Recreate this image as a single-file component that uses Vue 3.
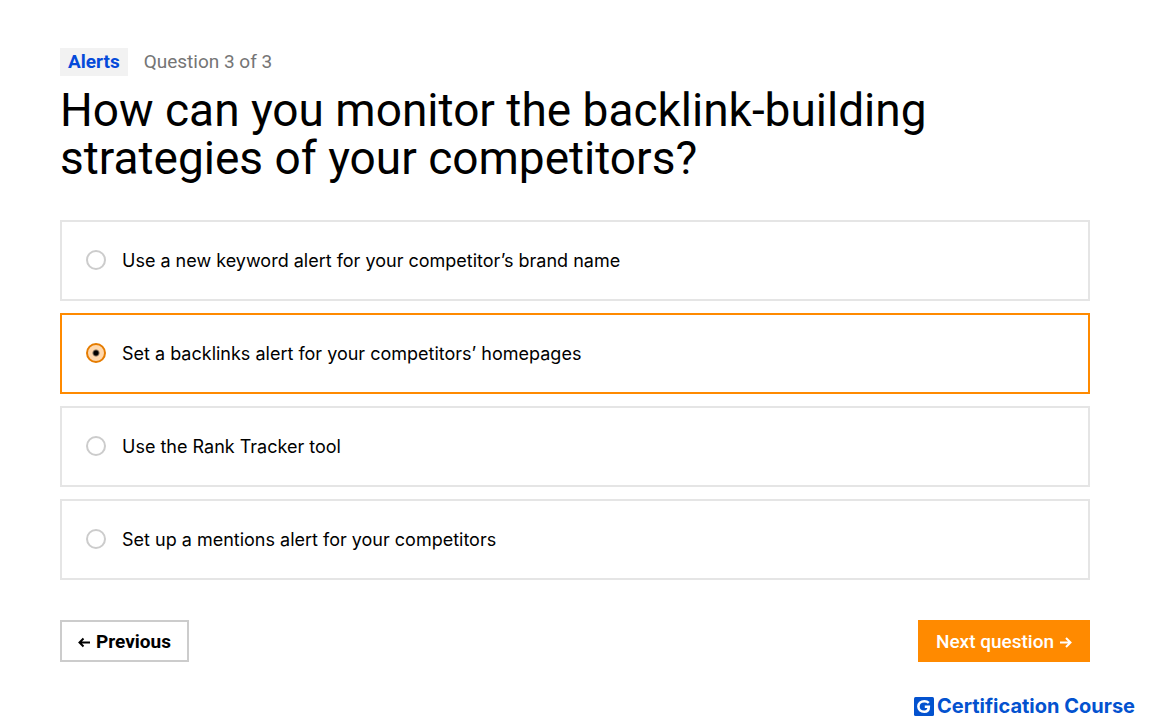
<template>
  <div class="page">
    <main class="quiz">
      <header class="quiz-header">
        <div class="meta">
          <a href="#" class="topic">Alerts</a>
          <span class="progress">Question 3 of 3</span>
        </div>
        <h1 id="question">How can you monitor the backlink-building strategies of your competitors?</h1>
      </header>

      <!-- Answers -->
      <div class="options" role="radiogroup" aria-labelledby="question">
        <label
          v-for="(option, index) in options"
          :key="index"
          class="option"
          :class="{ selected: selected === index }"
          :for="'option-' + index"
        >
          <input :id="'option-' + index" v-model="selected" type="radio" name="answer" :value="index" />
          <span>{{ option }}</span>
        </label>
      </div>

      <div class="actions">
        <button type="button" class="previous">
          <svg width="12" height="12" viewBox="0 0 12 12" aria-hidden="true">
            <path d="M12 6.5H1.5M5.5 2.5L1.5 6.5L5.5 10.5" />
          </svg>
          Previous
        </button>
        <button type="button" class="next">
          Next question
          <svg width="12" height="12" viewBox="0 0 12 12" aria-hidden="true">
            <path d="M0 6.5H10.5M6 2L10.5 6.5L6 11" />
          </svg>
        </button>
      </div>
    </main>

    <footer class="brand">
      <svg width="20" height="19" viewBox="0 0 20 19" aria-hidden="true">
        <rect width="20" height="19" rx="1.5" fill="#0352cf" />
        <path d="M14.8 5.9C13.6 4.8 12.2 4.3 10.4 4.3C6.8 4.3 4.4 6.5 4.4 9.5C4.4 12.6 6.8 14.8 10.3 14.8C12.9 14.8 14.8 13 14.8 9.8H10.8" fill="none" stroke="#fff" stroke-width="2.6" />
      </svg>
      <span>Certification Course</span>
    </footer>
  </div>
</template>

<script setup>
import { ref } from 'vue'

const options = [
  'Use a new keyword alert for your competitor’s brand name',
  'Set a backlinks alert for your competitors’ homepages',
  'Use the Rank Tracker tool',
  'Set up a mentions alert for your competitors'
]

const selected = ref(1)
</script>

<style>
body {
  background: #fff;
}
</style>

<style scoped>
.page {
  color: #000;
  font-family: Roboto, "Liberation Sans", sans-serif;
}

.quiz {
  padding: 48px 60px 0;
}

.meta {
  display: flex;
  align-items: center;
  gap: 16px;
  margin-bottom: 10px;
  font-size: 19px;
  line-height: 28px;
}

.topic {
  padding: 0 8px;
  background: #f2f2f2;
  color: #054ada;
  font-weight: 700;
  text-decoration: none;
}

.progress {
  color: #757575;
}

h1 {
  margin: 0;
  max-width: 960px;
  font-size: 46px;
  font-weight: 400;
  line-height: 48px;
}

.options {
  display: flex;
  flex-direction: column;
  gap: 12px;
  margin-top: 38px;
}

.option {
  display: flex;
  align-items: flex-start;
  gap: 16px;
  padding: 24px;
  border: 2px solid #e5e5e5;
  font-family: Inter, "Liberation Sans", sans-serif;
  font-size: 18px;
  line-height: 29px;
  cursor: pointer;
}

.option.selected {
  border-color: #ff8a00;
}

.option input {
  appearance: none;
  flex: none;
  width: 20px;
  height: 20px;
  margin: 4px 0 0;
  border: 2px solid #ccc;
  border-radius: 50%;
  background: #fff;
}

.option input:checked {
  border-color: #e57c00;
  background: radial-gradient(circle, #000 2px, #ffd8ad 4px);
}

.actions {
  display: flex;
  justify-content: space-between;
  margin-top: 40px;
}

.actions button {
  display: flex;
  align-items: center;
  gap: 6px;
  padding: 8px 16px 6px;
  border: 2px solid #ccc;
  background: #fff;
  color: #000;
  font-family: inherit;
  font-size: 19px;
  font-weight: 700;
  line-height: 24px;
  cursor: pointer;
}

.actions svg {
  fill: none;
  stroke: currentColor;
  stroke-width: 2;
}

.actions .next {
  border-color: #ff8a00;
  background: #ff8a00;
  color: #fff;
  font-weight: 500;
}

.brand {
  display: flex;
  align-items: center;
  justify-content: flex-end;
  gap: 3px;
  padding: 32px 15px 0;
  color: #0352cf;
  font-family: Inter, "Liberation Sans", sans-serif;
  font-size: 20px;
  font-weight: 700;
  line-height: 24px;
}
</style>
